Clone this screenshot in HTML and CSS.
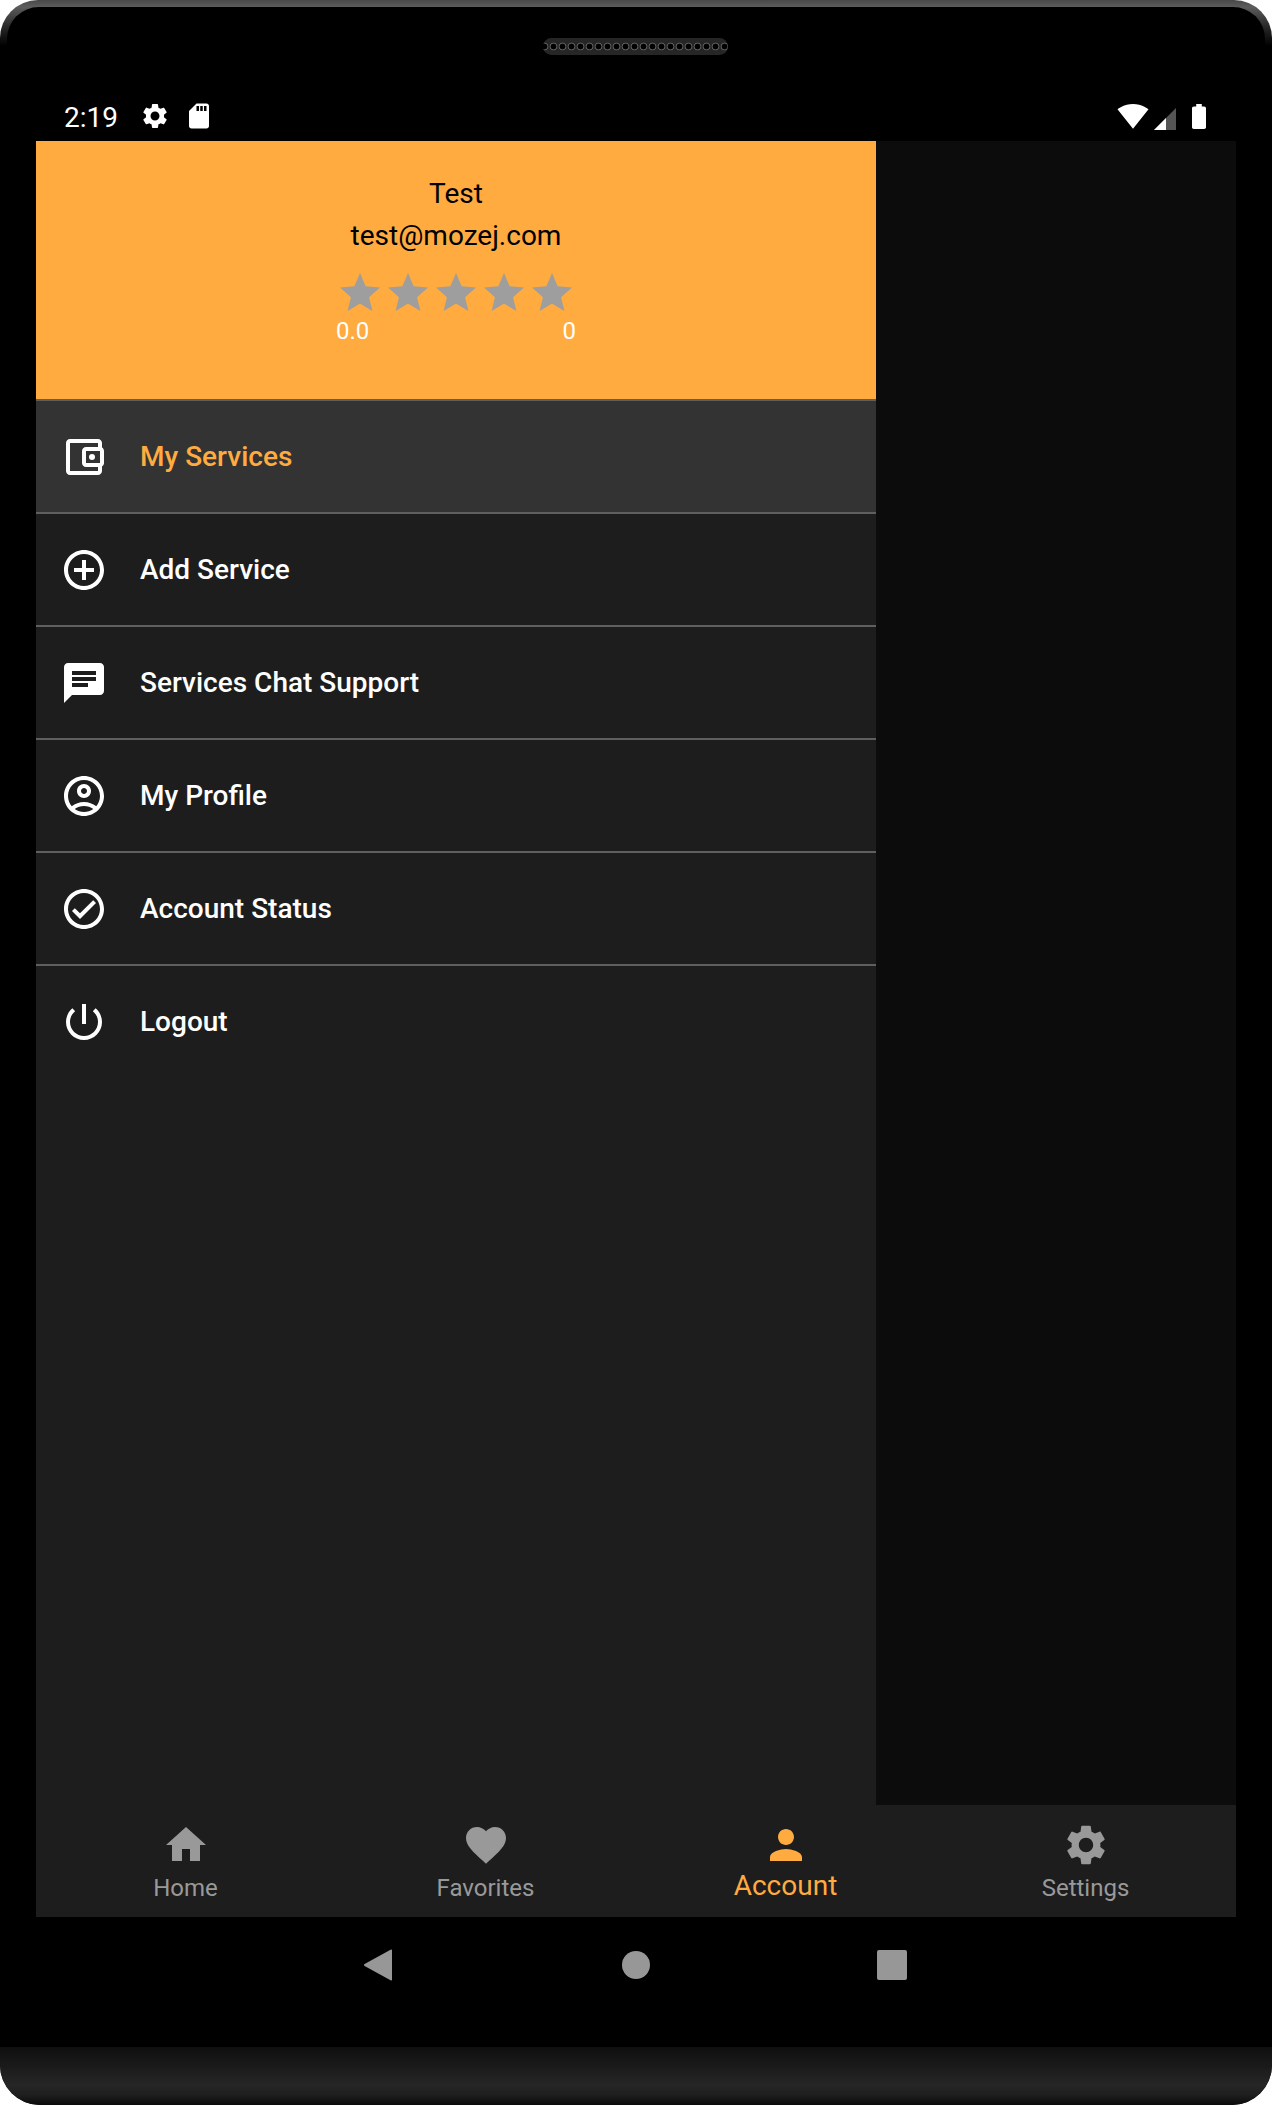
FILE: index.html
```html
<!DOCTYPE html>
<html lang="en">
<head>
    <meta charset="UTF-8">
    <meta name="viewport" content="width=device-width, initial-scale=1.0">
    <title>My Services</title>
    <link rel="stylesheet" href="styles.css">
</head>
<body>
    <div class="device">
        <div class="device-top">
            <div class="speaker"></div>
            <div class="status-bar">
                <div class="status-left">
                    <span class="status-time">2:19</span>
                    <svg class="status-icon gear-icon" viewBox="0 0 24 24"><path d="M19.14 12.94c.04-.3.06-.61.06-.94 0-.32-.02-.64-.07-.94l2.03-1.58c.18-.14.23-.41.12-.61l-1.92-3.32c-.12-.22-.37-.29-.59-.22l-2.39.96c-.5-.38-1.03-.7-1.62-.94l-.36-2.54c-.04-.24-.24-.41-.48-.41h-3.84c-.24 0-.43.17-.47.41l-.36 2.54c-.59.24-1.13.57-1.62.94l-2.39-.96c-.22-.08-.47 0-.59.22L2.74 8.87c-.12.21-.08.47.12.61l2.03 1.58c-.05.3-.09.63-.09.94s.02.64.07.94l-2.03 1.58c-.18.14-.23.41-.12.61l1.92 3.32c.12.22.37.29.59.22l2.39-.96c.5.38 1.03.7 1.62.94l.36 2.54c.05.24.24.41.48.41h3.84c.24 0 .44-.17.47-.41l.36-2.54c.59-.24 1.13-.56 1.62-.94l2.39.96c.22.08.47 0 .59-.22l1.92-3.32c.12-.22.07-.47-.12-.61l-2.01-1.58zM12 15.6c-1.98 0-3.6-1.62-3.6-3.6s1.62-3.6 3.6-3.6 3.6 1.62 3.6 3.6-1.62 3.6-3.6 3.6z"/></svg>
                    <svg class="status-icon" viewBox="0 0 24 24"><path d="M18 2h-8L4.02 8 4 20c0 1.1.9 2 2 2h12c1.1 0 2-.9 2-2V4c0-1.1-.9-2-2-2zm-6 6h-2V4h2v4zm3 0h-2V4h2v4zm3 0h-2V4h2v4z"/></svg>
                </div>
                <div class="status-right">
                    <svg class="wifi-icon" viewBox="0 0 24 24"><path d="M12.01 21.49L23.64 7c-.45-.34-4.93-4-11.64-4C5.28 3 .81 6.66.36 7l11.64 14.49.01.01.01-.01z"/></svg>
                    <svg class="signal-icon" viewBox="0 0 22 22"><path class="signal-dim" d="M0 22h22V0z"/><path d="M0 22h12V10z"/></svg>
                    <svg class="battery-icon" viewBox="7 2 10 20" preserveAspectRatio="none"><path d="M15.67 4H14V2h-4v2H8.33C7.6 4 7 4.6 7 5.33v15.33C7 21.4 7.6 22 8.33 22h7.33c.74 0 1.34-.6 1.34-1.33V5.33C17 4.6 16.4 4 15.67 4z"/></svg>
                </div>
            </div>
        </div>

        <div class="screen">
            <div class="content">
                <div class="drawer">
                    <div class="drawer-header">
                        <div class="user-line">Test</div>
                        <div class="user-line">test@mozej.com</div>
                        <div class="stars">
                            <svg viewBox="0 0 24 24"><path d="M12 17.27L18.18 21l-1.64-6.91L22 9.24l-7.19-.61L12 2 9.19 8.63 2 9.24l5.46 4.85L5.82 21z"/></svg>
                            <svg viewBox="0 0 24 24"><path d="M12 17.27L18.18 21l-1.64-6.91L22 9.24l-7.19-.61L12 2 9.19 8.63 2 9.24l5.46 4.85L5.82 21z"/></svg>
                            <svg viewBox="0 0 24 24"><path d="M12 17.27L18.18 21l-1.64-6.91L22 9.24l-7.19-.61L12 2 9.19 8.63 2 9.24l5.46 4.85L5.82 21z"/></svg>
                            <svg viewBox="0 0 24 24"><path d="M12 17.27L18.18 21l-1.64-6.91L22 9.24l-7.19-.61L12 2 9.19 8.63 2 9.24l5.46 4.85L5.82 21z"/></svg>
                            <svg viewBox="0 0 24 24"><path d="M12 17.27L18.18 21l-1.64-6.91L22 9.24l-7.19-.61L12 2 9.19 8.63 2 9.24l5.46 4.85L5.82 21z"/></svg>
                        </div>
                        <div class="rating-row">
                            <span>0.0</span>
                            <span>0</span>
                        </div>
                    </div>

                    <div class="menu-item active">
                        <svg viewBox="0 0 24 24"><path d="M21 7.28V5c0-1.1-.9-2-2-2H5c-1.11 0-2 .9-2 2v14c0 1.1.89 2 2 2h14c1.1 0 2-.9 2-2v-2.28c.59-.35 1-.98 1-1.72V9c0-.74-.41-1.37-1-1.72zM20 9v6h-7V9h7zM5 19V5h14v2h-6c-1.1 0-2 .9-2 2v6c0 1.1.9 2 2 2h6v2H5z"/><circle cx="16" cy="12" r="1.5"/></svg>
                        <span>My Services</span>
                    </div>
                    <div class="menu-item">
                        <svg viewBox="0 0 24 24"><path d="M13 7h-2v4H7v2h4v4h2v-4h4v-2h-4V7zm-1-5C6.48 2 2 6.48 2 12s4.48 10 10 10 10-4.48 10-10S17.52 2 12 2zm0 18c-4.41 0-8-3.59-8-8s3.59-8 8-8 8 3.59 8 8-3.59 8-8 8z"/></svg>
                        <span>Add Service</span>
                    </div>
                    <div class="menu-item">
                        <svg viewBox="0 0 24 24"><path d="M20 2H4c-1.1 0-1.99.9-1.99 2L2 22l4-4h14c1.1 0 2-.9 2-2V4c0-1.1-.9-2-2-2zM6 9h12v2H6V9zm8 5H6v-2h8v2zm4-6H6V6h12v2z"/></svg>
                        <span>Services Chat Support</span>
                    </div>
                    <div class="menu-item">
                        <svg viewBox="0 0 24 24"><path d="M12 2C6.48 2 2 6.48 2 12s4.48 10 10 10 10-4.48 10-10S17.52 2 12 2zM7.35 18.5C8.66 17.56 10.26 17 12 17s3.34.56 4.65 1.5c-1.31.94-2.91 1.5-4.65 1.5s-3.34-.56-4.65-1.5zm10.79-1.38C16.45 15.8 14.32 15 12 15s-4.45.8-6.14 2.12C4.7 15.73 4 13.95 4 12c0-4.42 3.58-8 8-8s8 3.58 8 8c0 1.95-.7 3.73-1.86 5.12z"/><path d="M12 6c-1.93 0-3.5 1.57-3.5 3.5S10.07 13 12 13s3.5-1.57 3.5-3.5S13.93 6 12 6zm0 5c-.83 0-1.5-.67-1.5-1.5S11.17 8 12 8s1.5.67 1.5 1.5S12.83 11 12 11z"/></svg>
                        <span>My Profile</span>
                    </div>
                    <div class="menu-item">
                        <svg viewBox="0 0 24 24"><path d="M12 2C6.48 2 2 6.48 2 12s4.48 10 10 10 10-4.48 10-10S17.52 2 12 2zm0 18c-4.41 0-8-3.59-8-8s3.59-8 8-8 8 3.59 8 8-3.59 8-8 8zm4.59-12.42L10 14.17l-2.59-2.58L6 13l4 4 8-8z"/></svg>
                        <span>Account Status</span>
                    </div>
                    <div class="menu-item">
                        <svg viewBox="0 0 24 24"><path d="M13 3h-2v10h2V3zm4.83 2.17l-1.42 1.42C17.99 7.86 19 9.81 19 12c0 3.87-3.13 7-7 7s-7-3.13-7-7c0-2.19 1.01-4.14 2.58-5.42L6.17 5.17C4.23 6.82 3 9.26 3 12c0 4.97 4.03 9 9 9s9-4.03 9-9c0-2.74-1.23-5.18-3.17-6.83z"/></svg>
                        <span>Logout</span>
                    </div>
                </div>
                <div class="scrim"></div>
            </div>

            <div class="bottom-nav">
                <div class="nav-item">
                    <svg viewBox="0 0 24 24"><path d="M10 20v-6h4v6h5v-8h3L12 3 2 12h3v8z"/></svg>
                    <span>Home</span>
                </div>
                <div class="nav-item">
                    <svg viewBox="0 0 24 24"><path d="M12 21.35l-1.45-1.32C5.4 15.36 2 12.28 2 8.5 2 5.42 4.42 3 7.5 3c1.74 0 3.41.81 4.5 2.09C13.09 3.81 14.76 3 16.5 3 19.58 3 22 5.42 22 8.5c0 3.78-3.4 6.86-8.55 11.54L12 21.35z"/></svg>
                    <span>Favorites</span>
                </div>
                <div class="nav-item selected">
                    <svg viewBox="0 0 24 24"><path d="M12 12c2.21 0 4-1.79 4-4s-1.79-4-4-4-4 1.79-4 4 1.79 4 4 4zm0 2c-2.67 0-8 1.34-8 4v2h16v-2c0-2.66-5.33-4-8-4z"/></svg>
                    <span>Account</span>
                </div>
                <div class="nav-item">
                    <svg viewBox="0 0 24 24"><path d="M19.14 12.94c.04-.3.06-.61.06-.94 0-.32-.02-.64-.07-.94l2.03-1.58c.18-.14.23-.41.12-.61l-1.92-3.32c-.12-.22-.37-.29-.59-.22l-2.39.96c-.5-.38-1.03-.7-1.62-.94l-.36-2.54c-.04-.24-.24-.41-.48-.41h-3.84c-.24 0-.43.17-.47.41l-.36 2.54c-.59.24-1.13.57-1.62.94l-2.39-.96c-.22-.08-.47 0-.59.22L2.74 8.87c-.12.21-.08.47.12.61l2.03 1.58c-.05.3-.09.63-.09.94s.02.64.07.94l-2.03 1.58c-.18.14-.23.41-.12.61l1.92 3.32c.12.22.37.29.59.22l2.39-.96c.5.38 1.03.7 1.62.94l.36 2.54c.05.24.24.41.48.41h3.84c.24 0 .44-.17.47-.41l.36-2.54c.59-.24 1.13-.56 1.62-.94l2.39.96c.22.08.47 0 .59-.22l1.92-3.32c.12-.22.07-.47-.12-.61l-2.01-1.58zM12 15.6c-1.98 0-3.6-1.62-3.6-3.6s1.62-3.6 3.6-3.6 3.6 1.62 3.6 3.6-1.62 3.6-3.6 3.6z"/></svg>
                    <span>Settings</span>
                </div>
            </div>
        </div>

        <div class="system-nav">
            <svg class="sys-back" viewBox="0 0 28 32"><path d="M27 0.6c.6-.3 1 .1 1 .7v29.4c0 .6-.4 1-1 .7L.6 17c-.8-.5-.8-1.500 0-2z"/></svg>
            <div class="sys-home"></div>
            <div class="sys-recent"></div>
        </div>
        <div class="chin"></div>
    </div>
</body>
</html>
```

FILE: styles.css
```css
html, body {
    margin: 0;
    background-color: #fff;
}
body {
    font-family: Roboto, "Liberation Sans", sans-serif;
}
svg {
    display: block;
    fill: currentColor;
    flex-shrink: 0;
}

.device {
    width: 1272px;
    height: 2105px;
    display: flex;
    flex-direction: column;
    border-radius: 38px 38px 40px 40px;
    overflow: hidden;
    background: linear-gradient(#484848 0, #5c5c5c 7px, #2a2a2a 26px, #000 46px);
}

/* top of the tablet: speaker and status bar */
.device-top {
    height: 134px;
    margin: 7px 7px 0;
    background-color: #000;
    border-radius: 32px 32px 0 0;
    display: flex;
    flex-direction: column;
    align-items: center;
}
.speaker {
    width: 185px;
    height: 17px;
    margin: 31px 2px 0 0;
    box-sizing: border-box;
    border-radius: 9px;
    background-color: #262626;
    background-image: radial-gradient(circle, #000 0, #000 2.6px, #5a5a5a 3.2px, #5a5a5a 3.6px, transparent 4.2px);
    background-size: 9px 17px;
    background-position: 6px 0;
    background-repeat: repeat-x;
}
.status-bar {
    align-self: stretch;
    height: 30px;
    margin-top: 46px;
    padding: 0 59px 0 57px;
    display: flex;
    justify-content: space-between;
    align-items: center;
    color: #fff;
}
.status-left {
    display: flex;
    align-items: center;
}
.status-time {
    font-size: 28px;
    width: 76px;
    padding-top: 2px;
}
.status-icon {
    width: 30px;
    height: 30px;
}
.gear-icon {
    margin-right: 14px;
}
.status-right {
    display: flex;
    align-items: center;
}
.wifi-icon {
    width: 32px;
    height: 32px;
    margin-right: 5px;
}
.signal-icon {
    width: 22px;
    height: 22px;
    margin: 5px 16px 0 0;
}
.signal-dim {
    fill: #555;
}
.battery-icon {
    width: 14px;
    height: 25px;
}

/* app area */
.screen {
    height: 1776px;
    margin: 0 36px;
    display: flex;
    flex-direction: column;
}
.content {
    flex: 1;
    display: flex;
}
.drawer {
    width: 840px;
    background-color: #1d1d1d;
}
.scrim {
    flex: 1;
    background-color: #0c0c0c;
}
.drawer-header {
    height: 258px;
    box-sizing: border-box;
    padding-top: 32px;
    background-color: #ffab40;
    display: flex;
    flex-direction: column;
    align-items: center;
    color: #000;
}
.user-line {
    font-size: 28px;
    line-height: 42px;
}
.stars {
    display: flex;
    margin-top: 12px;
    color: #9e9e9e;
}
.stars svg {
    width: 48px;
    height: 48px;
}
.rating-row {
    width: 240px;
    display: flex;
    justify-content: space-between;
    font-size: 24px;
    line-height: 28px;
    color: #fff;
}

.menu-item {
    height: 113px;
    box-sizing: border-box;
    padding-left: 24px;
    display: flex;
    align-items: center;
    gap: 32px;
    border-top: 2px solid #5f5f5f;
    color: #fff;
    font-size: 28px;
    font-weight: 500;
}
.menu-item svg {
    width: 48px;
    height: 48px;
}
.menu-item.active {
    background-color: #333;
}
.menu-item.active span {
    color: #ffab40;
}

.bottom-nav {
    height: 112px;
    display: grid;
    grid-template-columns: repeat(4, 1fr);
    background-color: #1d1d1d;
    color: #999;
}
.nav-item {
    display: flex;
    flex-direction: column;
    align-items: center;
    padding-top: 16px;
    font-size: 24px;
    line-height: 28px;
}
.nav-item svg {
    width: 48px;
    height: 48px;
}
.nav-item span {
    margin: 5px 1px 0 0;
}
.nav-item.selected {
    color: #ffab40;
    font-size: 28px;
}
.nav-item.selected span {
    margin-top: 3px;
}

/* android buttons under the screen */
.system-nav {
    height: 130px;
    box-sizing: border-box;
    padding: 32px 2px 0 0;
    background-color: #000;
    display: flex;
    justify-content: center;
    align-items: flex-start;
    color: #979797;
}
.sys-back {
    width: 28px;
    height: 32px;
}
.sys-home {
    width: 28px;
    height: 28px;
    margin: 2px 0 0 230px;
    border-radius: 50%;
    background-color: #979797;
}
.sys-recent {
    width: 30px;
    height: 30px;
    margin: 1px 0 0 227px;
    border-radius: 2px;
    background-color: #979797;
}

.chin {
    flex: 1;
    background: linear-gradient(#0f0f0f 0, #262626 66%, #1f1f1f 82%, #0a0a0a 100%);
}
```
